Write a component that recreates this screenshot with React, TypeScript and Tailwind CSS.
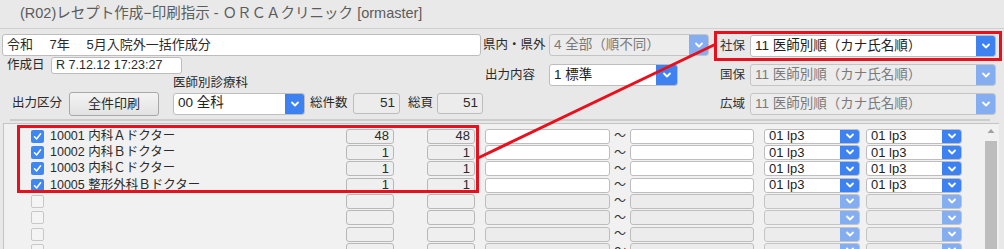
import React from "react";

const Chevron = ({ className = "" }: { className?: string }) => (
  <svg width="10" height="8" viewBox="0 0 10 8" className={className}>
    <path d="M2 2.5 L5 5.5 L8 2.5" fill="none" stroke="white" strokeWidth="1.8" strokeLinecap="round" strokeLinejoin="round" />
  </svg>
);

const Select = ({
  text,
  disabled = false,
  className = "",
  btn = "w-[19px]",
}: {
  text: string;
  disabled?: boolean;
  className?: string;
  btn?: string;
}) => (
  <div
    className={`flex rounded-[3px] border overflow-hidden ${
      disabled ? "border-[#c4c4c4] bg-[#ececec] text-[#7a7a7a]" : "border-[#bdbdbd] bg-white text-[#222]"
    } ${className}`}
  >
    <div className="flex-1 flex items-center pl-[4px] whitespace-nowrap overflow-hidden">{text}</div>
    <div
      className={`${btn} flex items-center justify-center ${disabled ? "bg-[#85aef0]" : "bg-[#3d82f0]"}`}
    >
      <Chevron />
    </div>
  </div>
);

const Check = ({ on }: { on: boolean }) =>
  on ? (
    <div className="w-[13px] h-[13px] rounded-[2px] bg-[#3f87f2] flex items-center justify-center">
      <svg width="11" height="11" viewBox="0 0 11 11">
        <path d="M2.5 5.8 L4.6 8 L8.6 2.8" fill="none" stroke="white" strokeWidth="1.5" strokeLinecap="round" strokeLinejoin="round" />
      </svg>
    </div>
  ) : (
    <div className="w-[13px] h-[13px] rounded-[2px] bg-[#f4f4f4] border border-[#c8c8c8]" />
  );

const rows = [
  { name: "10001 内科Ａドクター", a: "48", b: "48" },
  { name: "10002 内科Ｂドクター", a: "1", b: "1" },
  { name: "10003 内科Ｃドクター", a: "1", b: "1" },
  { name: "10005 整形外科Ｂドクター", a: "1", b: "1" },
  null,
  null,
  null,
  null,
];

export default function App() {
  return (
    <div className="relative w-[1004px] h-[249px] overflow-hidden bg-[#e8e8e8] text-[#2a2a2a] font-[family-name:'Liberation_Sans','Noto_Sans_CJK_JP',sans-serif]">
      {/* title */}
      <div className="h-[29px] border-b border-[#cfcfcf] bg-[#e9e9e9] flex items-center pl-[20px] text-[14.5px] text-[#5c5c5c]">
        (R02)レセプト作成−印刷指示 - ＯＲＣＡクリニック [ormaster]
      </div>

      {/* top form */}
      <div className="flex h-[90px]">
        {/* left column */}
        <div className="w-[483px] pl-[2px] pt-[5px]">
          <div className="w-[479px] h-[22px] bg-white border border-[#bdbdbd] rounded-[3px] flex items-center pl-[4px] text-[13px]">
            令和　 7年　 5月入院外一括作成分
          </div>
          <div className="flex items-center h-[17px] mt-[1px]">
            <div className="w-[49px] pl-[5px] text-[12.5px]">作成日</div>
            <div className="w-[131px] h-[17px] bg-white border border-[#bdbdbd] rounded-[3px] flex items-center pl-[4px] text-[12.5px]">
              R 7.12.12 17:23:27
            </div>
          </div>
          <div className="h-[15px] pl-[171px] text-[12.5px] leading-[15px] mt-[2px]">医師別診療科</div>
          <div className="flex items-center h-[25px]">
            <div className="w-[67px] pl-[10px] text-[12.5px]">出力区分</div>
            <div className="w-[90px] h-[24px] rounded-[3px] border border-[#a8a8a8] bg-gradient-to-b from-[#f4f4f4] to-[#e2e2e2] flex items-center justify-center text-[13px]">
              全件印刷
            </div>
            <Select text="00 全科" className="ml-[14px] w-[132px] h-[22px] text-[13.5px]" />
            <div className="ml-[5px] w-[43px] text-[12.5px]">総件数</div>
            <div className="w-[47px] h-[21px] rounded-[3px] border border-[#bdbdbd] bg-[#ececec] flex items-center justify-end pr-[4px] text-[13.5px]">
              51
            </div>
            <div className="ml-[8px] w-[29px] text-[12.5px]">総頁</div>
            <div className="w-[46px] h-[21px] rounded-[3px] border border-[#bdbdbd] bg-[#ececec] flex items-center justify-end pr-[4px] text-[13.5px]">
              51
            </div>
          </div>
        </div>

        {/* middle column */}
        <div className="w-[229px] pt-[5px]">
          <div className="flex items-center h-[22px]">
            <div className="w-[66px] text-[12.5px] whitespace-nowrap">県内・県外</div>
            <Select text="4 全部（順不同）" disabled className="w-[160px] h-[22px] text-[13.5px]" />
          </div>
          <div className="flex items-center h-[22px] mt-[8px]">
            <div className="w-[66px] pl-[2px] text-[12.5px]">出力内容</div>
            <Select text="1 標準" className="w-[129px] h-[22px] text-[13.5px]" btn="w-[21px]" />
          </div>
        </div>

        {/* right column */}
        <div className="w-[292px] pt-[6px] pl-[8px]">
          {[
            { l: "社保", d: false },
            { l: "国保", d: true },
            { l: "広域", d: true },
          ].map((r, i) => (
            <div key={r.l} className={`flex items-center h-[22px] ${i > 0 ? "mt-[7px]" : ""}`}>
              <div className="w-[30px] text-[12.5px] text-[#333]">{r.l}</div>
              <Select text="11 医師別順（カナ氏名順）" disabled={r.d} className="w-[246px] h-[22px] text-[13.5px]" />
            </div>
          ))}
        </div>
      </div>

      {/* separator */}
      <div className="mx-[10px] w-[980px] h-[2px] bg-[#cdcdcd]" />

      {/* list panel */}
      <div className="ml-[3px] mt-[2px] w-[996px] h-[200px] border-l border-t border-[#c4c4c4] bg-[#f1f1f1] flex">
        <div className="w-[976px] pt-[4px]">
          {rows.map((r, i) => (
            <div key={i} className="flex items-center h-[16.33px]">
              <div className="w-[342px] flex items-center pl-[27px] text-[12.5px] whitespace-nowrap">
                <Check on={!!r} />
                <span className="ml-[6px]">{r ? r.name : ""}</span>
              </div>
              <div className="w-[48px] h-[15px] rounded-[3px] border border-[#b8b8b8] bg-[#efefef] flex items-center justify-end pr-[4px] text-[13px]">
                {r ? r.a : ""}
              </div>
              <div className="ml-[33px] w-[48px] h-[15px] rounded-[3px] border border-[#b8b8b8] bg-[#efefef] flex items-center justify-end pr-[4px] text-[13px]">
                {r ? r.b : ""}
              </div>
              <div className={`ml-[10px] w-[125px] h-[15px] rounded-[3px] border border-[#bdbdbd] ${r ? "bg-white" : "bg-[#ececec]"}`} />
              <div className="w-[20px] text-center text-[12px] text-[#333]">〜</div>
              <div className={`w-[124px] h-[15px] rounded-[3px] border border-[#bdbdbd] ${r ? "bg-white" : "bg-[#ececec]"}`} />
              <Select text={r ? "01 lp3" : ""} disabled={!r} className="ml-[10px] w-[96px] h-[15px] text-[13px]" btn="w-[19px]" />
              <Select text={r ? "01 lp3" : ""} disabled={!r} className="ml-[6px] w-[96px] h-[15px] text-[13px]" btn="w-[19px]" />
            </div>
          ))}
        </div>
        {/* scrollbar */}
        <div className="w-[14px] ml-[4px] flex flex-col items-center pt-[3px]">
          <svg width="10" height="8" viewBox="0 0 10 8">
            <path d="M1.5 6 L5 2 L8.5 6 Z" fill="#a0a0a0" />
          </svg>
          <div className="mt-[6px] w-[12px] flex-1 bg-[#bdbdbd]" />
        </div>
      </div>

      {/* red annotations */}
      <div className="absolute left-[17px] top-[125px] w-[462px] h-[68px] border-[3px] border-[#e8101c]" />
      <div className="absolute left-[714px] top-[31px] w-[288px] h-[30px] border-[3px] border-[#e8101c]" />
      <svg className="absolute left-0 top-0 pointer-events-none" width="1004" height="249">
        <line x1="478" y1="158" x2="716" y2="44" stroke="#e8101c" strokeWidth="3" />
      </svg>
    </div>
  );
}
